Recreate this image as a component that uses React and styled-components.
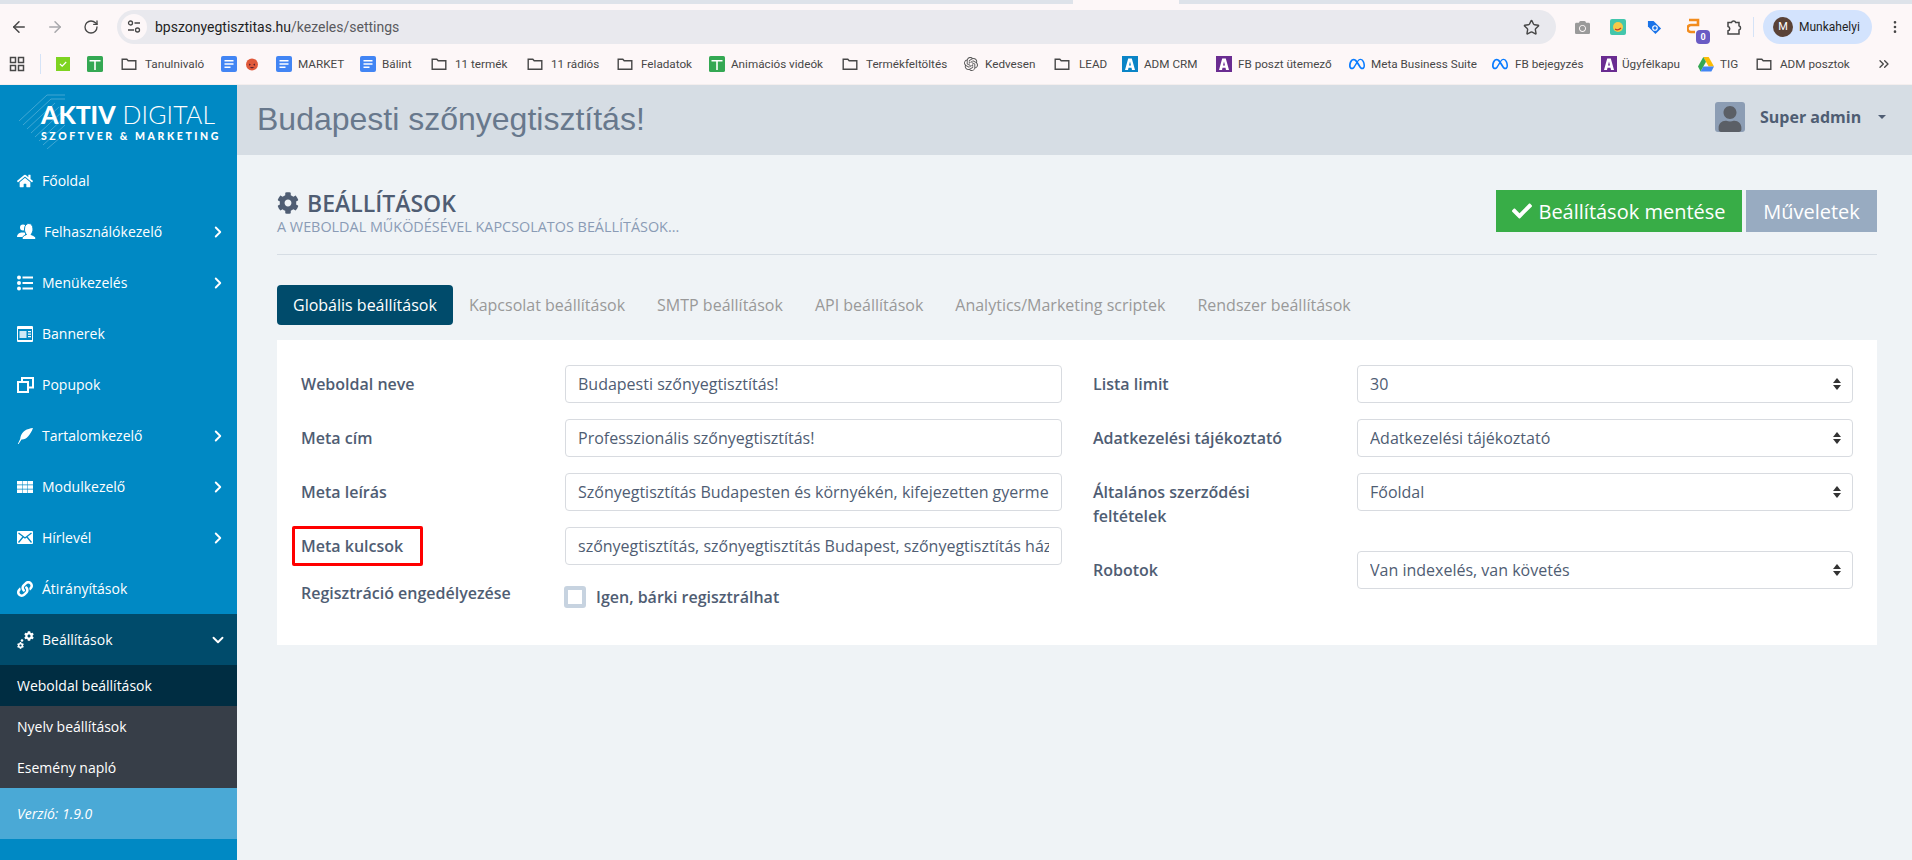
import styled, { createGlobalStyle } from "styled-components";
import { ArrowLeft, ArrowRight, RotateCw, Star, ChevronRight, ChevronDown, ChevronsRight, EllipsisVertical } from "lucide-react";
import { FaHome, FaLink, FaCog, FaCheck, FaUser, FaCamera } from "react-icons/fa";
import { SiMeta, SiOpenai } from "react-icons/si";

const GlobalStyle = createGlobalStyle`
  html, body { margin: 0; padding: 0; height: 100%; }
  body { font-family: "Open Sans", "Noto Sans", sans-serif; background: #eff3f6; overflow: hidden; }
  * { box-sizing: border-box; }
`;

const Page = styled.div`
  width: 1912px;
  height: 860px;
  display: flex;
  flex-direction: column;
  overflow: hidden;
`;

/* browser chrome */
const TabStrip = styled.div`
  height: 4px;
  flex: none;
  background: #dee3ea;
  display: flex;
  padding-left: 1073px;
`;
const TabStub = styled.div`
  width: 106px;
  background: #fdf7f8;
`;
const Toolbar = styled.div`
  height: 40px;
  flex: none;
  background: #fdf7f8;
  display: flex;
  align-items: flex-start;
  padding: 6px 0 0 1px;
`;
const NavButton = styled.div`
  width: 36px;
  height: 34px;
  flex: none;
  display: flex;
  align-items: center;
  justify-content: center;
  color: ${(p) => (p.$off ? "#a8a8ac" : "#474747")};
`;
const Omnibox = styled.div`
  width: 1439px;
  height: 34px;
  flex: none;
  margin-left: 8px;
  border-radius: 17px;
  background: #e9e9ee;
  display: flex;
  align-items: center;
  padding: 0 16px 0 4px;
`;
const TuneBadge = styled.div`
  width: 26px;
  height: 26px;
  border-radius: 50%;
  background: #fdf7f8;
  display: flex;
  align-items: center;
  justify-content: center;
  margin-right: 8px;
`;
const Url = styled.div`
  flex: 1;
  font-family: Roboto, sans-serif;
  font-size: 14px;
  color: #1f1f1f;
  span { color: #5a5a5e; }
`;
const ExtSlot = styled.div`
  width: ${(p) => p.$w}px;
  height: 34px;
  flex: none;
  position: relative;
  display: flex;
  align-items: center;
  justify-content: center;
  color: ${(p) => p.$color ?? "#474747"};
`;
const CountBadge = styled.span`
  position: absolute;
  right: 6px;
  bottom: 0;
  width: 14px;
  height: 14px;
  border-radius: 4px;
  background: #6a5bc4;
  color: #fff;
  font: 700 9px/14px Roboto, sans-serif;
  text-align: center;
`;
const ToolbarSep = styled.div`
  width: 1px;
  height: 20px;
  flex: none;
  margin: 7px 9px 0 1px;
  background: #d5e3f7;
`;
const ProfilePill = styled.div`
  width: 109px;
  height: 34px;
  flex: none;
  border-radius: 17px;
  background: #d3e3fd;
  display: flex;
  align-items: center;
  padding-left: 10px;
  gap: 6px;
  font-family: Roboto, sans-serif;
  font-size: 12px;
  color: #1f1f1f;
`;
const ProfileAvatar = styled.div`
  width: 20px;
  height: 20px;
  border-radius: 50%;
  background: #5a4236;
  color: #fff;
  font-size: 11px;
  line-height: 20px;
  text-align: center;
`;
const BookmarkBar = styled.div`
  height: 41px;
  flex: none;
  background: #fdf7f8;
  display: flex;
  align-items: center;
  padding-left: 9px;
  border-bottom: 1px solid #f4eeee;
`;
const Bookmark = styled.div`
  width: ${(p) => p.$w}px;
  flex: none;
  display: flex;
  align-items: center;
  gap: ${(p) => p.$gap ?? 6}px;
  font-family: Roboto, sans-serif;
  font-size: 11.7px;
  color: #474747;
  white-space: nowrap;
`;
const BarSep = styled.div`
  width: ${(p) => p.$w}px;
  height: 20px;
  flex: none;
  border-left: 1px solid #d5e3f7;
`;

const Folder = () => (
  <svg width="16" height="16" viewBox="0 0 16 16" fill="none" stroke="#474747" strokeWidth="1.4">
    <path d="M1.2 3.2h4.6l1.4 1.6h7.6v8.4H1.2z" />
  </svg>
);
const Doc = () => (
  <svg width="16" height="16" viewBox="0 0 16 16">
    <rect width="16" height="16" rx="2" fill="#4285f4" />
    <path d="M3.5 4h9v1.5h-9zM3.5 7.200h9v1.500h-9zM3.500 10.500h6v1.500h-6z" fill="#fff" />
  </svg>
);
const Sheet = () => (
  <svg width="16" height="16" viewBox="0 0 16 16">
    <rect width="16" height="16" rx="1.6" fill="#34a853" />
    <path d="M2.500 4h11v1.600H8.800V14H7.200V5.600H2.500z" fill="#fff" />
  </svg>
);
const CheckSquare = () => (
  <svg width="14" height="14" viewBox="0 0 14 14">
    <rect width="14" height="14" fill="#7ed321" />
    <path d="M4 7l2.200 2.200L10.200 5" stroke="#fff" fill="none" strokeWidth="1.2" />
  </svg>
);
const Pumpkin = () => (
  <svg width="14" height="14" viewBox="0 0 14 14">
    <circle cx="7" cy="7.4" r="6" fill="#e0593a" />
    <path d="M4 6.500l2 1.200-2 1zM10 6.500l-2 1.200 2 1z" fill="#5b2130" />
    <path d="M4.500 10h5l-2.500 1.400z" fill="#5b2130" />
  </svg>
);
const AdmLogo = ({ bg }) => (
  <svg width="16" height="16" viewBox="0 0 16 16">
    <rect width="16" height="16" fill={bg} />
    <path d="M6.200 2.500h3.600L13 14h-3l-.5-2.200h-3L6 14H3zM7 9.500h2L8 5.500z" fill="#fff" />
  </svg>
);
const Drive = () => (
  <svg width="16" height="15" viewBox="0 0 16 15">
    <path d="M5.300 0h5.400L16 9.600h-5.300z" fill="#fbbc04" />
    <path d="M5.300 0L0 9.600l2.600 4.900L8 4.800z" fill="#34a853" />
    <path d="M5.300 9.600H16l-2.600 4.900H2.600z" fill="#4285f4" />
  </svg>
);
const Apps = () => (
  <svg width="16" height="16" viewBox="0 0 16 16" fill="none" stroke="#474747" strokeWidth="1.5">
    <rect x="1.5" y="1.5" width="5" height="5" />
    <rect x="9.5" y="1.5" width="5" height="5" />
    <rect x="1.5" y="9.5" width="5" height="5" />
    <rect x="9.5" y="9.5" width="5" height="5" />
  </svg>
);
const MetaMark = () => <SiMeta size={16} color="#0a7cff" />;

/* app shell */
const Shell = styled.div`
  flex: 1;
  display: flex;
  min-height: 0;
`;
const Sidebar = styled.aside`
  width: 237px;
  flex: none;
  background: #0089c4;
  color: #fff;
  display: flex;
  flex-direction: column;
`;
const LogoBlock = styled.div`
  height: 70px;
  position: relative;
  padding: 17px 0 0 41px;
  font-family: Lato, sans-serif;
  overflow: hidden;
`;
const LogoPattern = styled.svg`
  position: absolute;
  left: 17px;
  top: 2px;
`;
const LogoMain = styled.div`
  position: relative;
  font-size: 24.8px;
  line-height: 26px;
  font-weight: 300;
  white-space: nowrap;
  letter-spacing: 0.2px;
  b { font-weight: 900; letter-spacing: 0; }
`;
const LogoSub = styled.div`
  position: relative;
  font-size: 10.5px;
  line-height: 12px;
  font-weight: 900;
  letter-spacing: 2.58px;
  white-space: nowrap;
  margin-top: 2px;
`;
const NavItem = styled.div`
  height: 51px;
  flex: none;
  display: flex;
  align-items: center;
  padding-left: 17px;
  font-size: 14px;
  font-weight: 500;
  background: ${(p) => (p.$active ? "#004b6b" : "transparent")};
`;
const NavIcon = styled.span`
  width: ${(p) => p.$w ?? 25}px;
  flex: none;
  display: flex;
  align-items: center;
`;
const NavLabel = styled.span`
  flex: 1;
`;
const NavArrow = styled.span`
  width: 36px;
  display: flex;
  justify-content: center;
  padding-right: 2px;
`;
const SubItem = styled.div`
  height: 41px;
  flex: none;
  display: flex;
  align-items: center;
  padding-left: 17px;
  font-size: 14px;
  font-weight: 500;
  background: ${(p) => (p.$active ? "#002d42" : "#373e48")};
`;
const VersionBar = styled.div`
  height: 51px;
  flex: none;
  display: flex;
  align-items: center;
  padding-left: 17px;
  background: #4aa9d6;
  font-size: 14px;
  font-style: italic;
`;

const Main = styled.main`
  flex: 1;
  display: flex;
  flex-direction: column;
  min-width: 0;
`;
const TopBar = styled.header`
  height: 70px;
  flex: none;
  background: #d6dde4;
  display: flex;
  align-items: center;
  padding: 0 0 6px 20px;
`;
const SiteTitle = styled.div`
  flex: 1;
  padding-top: 5px;
  font-family: "Liberation Sans", Arial, sans-serif;
  font-size: 32px;
  color: #68788c;
`;
const UserAvatar = styled.div`
  width: 30px;
  height: 30px;
  border-radius: 3px;
  background: #8c9db4;
  overflow: hidden;
  margin-right: 15px;
  display: flex;
  align-items: flex-end;
  justify-content: center;
`;
const UserName = styled.div`
  font-size: 16px;
  font-weight: 700;
  color: #4f5d73;
  width: 118px;
`;
const Caret = styled.div`
  width: 0;
  height: 0;
  margin-right: 26px;
  border-left: 4px solid transparent;
  border-right: 4px solid transparent;
  border-top: 4px solid #4f5d73;
`;
const Content = styled.div`
  flex: 1;
  padding: 35px 35px 0 40px;
`;
const PageHead = styled.div`
  height: 65px;
  display: flex;
  justify-content: space-between;
  border-bottom: 1px solid #d6dde4;
`;
const TitleRow = styled.h1`
  margin: 0;
  display: flex;
  align-items: center;
  gap: 8px;
  font-size: 23px;
  line-height: 26px;
  font-weight: 600;
  color: #4f5d73;
`;
const SubTitle = styled.div`
  font-size: 14.4px;
  line-height: 16px;
  margin-top: 3px;
  color: #8a9bb5;
`;
const Actions = styled.div`
  display: flex;
  gap: 4px;
`;
const ActionButton = styled.div`
  width: ${(p) => p.$w}px;
  height: 42px;
  background: ${(p) => p.$bg};
  color: #fff;
  font-size: 20px;
  display: flex;
  align-items: center;
  justify-content: center;
  gap: 6px;
`;
const Tabs = styled.div`
  display: flex;
  margin-top: 30px;
  height: 40px;
`;
const Tab = styled.div`
  padding: 0 16px;
  display: flex;
  align-items: center;
  font-size: 16px;
  border-radius: 4px;
  color: ${(p) => (p.$active ? "#fff" : "#999")};
  background: ${(p) => (p.$active ? "#004b6b" : "transparent")};
`;
const Card = styled.section`
  margin-top: 15px;
  background: #fff;
  padding: 25px 24px 21px 24px;
  display: grid;
  grid-template-columns: 761px 760px;
  column-gap: 31px;
  align-items: start;
`;
const Row = styled.div`
  display: grid;
  grid-template-columns: 264px 1fr;
  align-items: start;
  margin-bottom: 16px;
`;
const Label = styled.label`
  position: relative;
  display: block;
  padding: ${(p) => (p.$flat ? "0" : "7px 0")};
  font-size: 16px;
  line-height: 24px;
  font-weight: 600;
  color: #4f5d73;
  max-width: 220px;
`;
const Highlight = styled.span`
  position: absolute;
  left: -9px;
  top: -1px;
  width: 131px;
  height: 40px;
  border: 3px solid #f00;
  border-radius: 2px;
`;
const TextInput = styled.input`
  width: 100%;
  height: 38px;
  padding: 0 12px;
  font: 400 16px "Open Sans", sans-serif;
  color: #4f5d73;
  background: #fff;
  border: 1px solid #d8dbe0;
  border-radius: 4px;
  outline: none;
`;
const SelectWrap = styled.div`
  position: relative;
  &::before, &::after {
    content: "";
    position: absolute;
    right: 12px;
    border-left: 4px solid transparent;
    border-right: 4px solid transparent;
  }
  &::before { top: 13px; border-bottom: 5px solid #333; }
  &::after { top: 20px; border-top: 5px solid #333; }
`;
const Select = styled.select`
  width: 100%;
  height: 38px;
  padding: 0 12px;
  appearance: none;
  font: 400 16px "Open Sans", sans-serif;
  color: #4f5d73;
  background: #fff;
  border: 1px solid #d8dbe0;
  border-radius: 4px;
  outline: none;
`;
const CheckRow = styled.div`
  display: flex;
  align-items: center;
  gap: 10px;
  margin: 5px 0 0 -1px;
  font-size: 16px;
  font-weight: 600;
  color: #4f5d73;
`;
const CheckBox = styled.span`
  width: 22px;
  height: 22px;
  background: #fff;
  border: 4px solid #c7d3e0;
  border-radius: 3px;
`;

// left edge of each bookmark in the bar, the slot width is taken from the next one
const bookmarks = [
  { x: 9, icon: <Apps /> },
  { x: 40, sep: true },
  { x: 56, icon: <CheckSquare /> },
  { x: 87, icon: <Sheet /> },
  { x: 121, icon: <Folder />, gap: 8, text: "Tanulnivaló" },
  { x: 221, icon: <Doc /> },
  { x: 245, icon: <Pumpkin /> },
  { x: 276, icon: <Doc />, text: "MARKET" },
  { x: 360, icon: <Doc />, text: "Bálint" },
  { x: 431, icon: <Folder />, gap: 8, text: "11 termék" },
  { x: 527, icon: <Folder />, gap: 8, text: "11 rádiós" },
  { x: 617, icon: <Folder />, gap: 8, text: "Feladatok" },
  { x: 709, icon: <Sheet />, text: "Animációs videók" },
  { x: 842, icon: <Folder />, gap: 8, text: "Termékfeltöltés" },
  { x: 964, icon: <SiOpenai size={14} color="#555" />, gap: 7, text: "Kedvesen" },
  { x: 1054, icon: <Folder />, gap: 9, text: "LEAD" },
  { x: 1122, icon: <AdmLogo bg="#0a84c6" />, text: "ADM CRM" },
  { x: 1216, icon: <AdmLogo bg="#6a2c91" />, text: "FB poszt ütemező" },
  { x: 1349, icon: <MetaMark />, text: "Meta Business Suite" },
  { x: 1492, icon: <MetaMark />, gap: 7, text: "FB bejegyzés" },
  { x: 1601, icon: <AdmLogo bg="#6a2c91" />, gap: 5, text: "Ügyfélkapu" },
  { x: 1698, icon: <Drive />, text: "TIG" },
  { x: 1756, icon: <Folder />, gap: 8, text: "ADM posztok" },
  { x: 1876 },
];

const UsersIcon = () => (
  <svg width="19" height="17" viewBox="0 0 19 17" fill="#fff">
    <circle cx="6" cy="4.5" r="3" />
    <path d="M0 14c0-3 2.500-4 4-4.500h4V14z" />
    <path d="M5 16.500c0-3 2-4 4.500-5-1.500-1.500-2-3.500-2-5.500C7.500 2.500 9.500.5 11.800.5S16 2.500 16 6c0 2-.6 4-2 5.500 2.500 1 5 2 5 5z" stroke="#0089c4" strokeWidth="1" />
  </svg>
);
const ListIcon = () => (
  <svg width="16" height="16" viewBox="0 0 16 16" fill="#fff">
    <circle cx="2" cy="2.5" r="2" /><circle cx="2" cy="8" r="2" /><circle cx="2" cy="13.5" r="2" />
    <path d="M5.500 1.500H16v2H5.500zM5.500 7H16v2H5.500zM5.500 12.500H16v2H5.500z" />
  </svg>
);
const BannerIcon = () => (
  <svg width="16" height="16" viewBox="0 0 16 16">
    <rect width="16" height="16" rx="1" fill="#fff" />
    <rect x="1" y="3" width="14" height="11" fill="#0089c4" />
    <rect x="2.5" y="5" width="7" height="7" fill="#cfe9f5" />
    <path d="M11 5h3v1.200h-3zM11 7.500h3v1.200h-3zM11 10h3v1.200h-3z" fill="#fff" />
  </svg>
);
const PopupIcon = () => (
  <svg width="17" height="16" viewBox="0 0 17 16" fill="none" stroke="#fff" strokeWidth="2">
    <path d="M5 5V1h11v9.500h-5" />
    <rect x="1" y="5" width="10" height="10" />
  </svg>
);
const QuillIcon = () => (
  <svg width="16" height="16" viewBox="0 0 16 16" fill="#fff">
    <path d="M16 0C10 .8 5 3 3.500 9L3.200 11 .8 16h.8L4.500 11.500C9 12 13.500 7 16 0z" />
  </svg>
);
const GridIcon = () => (
  <svg width="16" height="12" viewBox="0 0 16 12" fill="#fff">
    <path d="M0 0h5v3.500H0zM5.500 0h5v3.500h-5zM11 0h5v3.500h-5zM0 4.250h5v3.500H0zM5.500 4.250h5v3.500h-5zM11 4.250h5v3.500h-5zM0 8.500h5V12H0zM5.500 8.500h5V12h-5zM11 8.500h5V12h-5z" />
  </svg>
);
const MailIcon = () => (
  <svg width="16" height="13" viewBox="0 0 16 13">
    <rect width="16" height="13" rx="1" fill="#fff" />
    <path d="M1.500 2L8 7l6.500-5M1.500 11.500l4.500-5.500M14.500 11.500L10 6" stroke="#0089c4" strokeWidth="1.3" fill="none" />
  </svg>
);
const CogsIcon = () => (
  <svg width="17" height="18" viewBox="0 0 17 18">
    <FaCog x="7" y="0" size={10} color="#fff" />
    <FaCog x="0" y="11" size={7} color="#fff" />
    <circle cx="5" cy="9.5" r="1.3" fill="#fff" />
  </svg>
);
const TuneIcon = () => (
  <svg width="16" height="16" viewBox="0 0 16 16" fill="none" stroke="#474747" strokeWidth="1.3">
    <circle cx="4.5" cy="4" r="2" />
    <path d="M8.500 4H14M2 11h6" />
    <circle cx="11.5" cy="11" r="2" />
  </svg>
);
const EmojiExt = () => (
  <svg width="16" height="16" viewBox="0 0 16 16">
    <rect width="16" height="16" rx="2" fill="#43c6ac" />
    <circle cx="8" cy="8" r="5" fill="#f7c948" />
    <path d="M5 10c2 1.500 4 1 6-1" stroke="#c0392b" fill="none" strokeWidth="1.2" />
  </svg>
);
const TagExt = () => (
  <svg width="15" height="15" viewBox="0 0 16 16">
    <path d="M1 1h6l8 8-6 6-8-8z" fill="#1a73e8" />
    <circle cx="8.5" cy="8.5" r="2.4" fill="none" stroke="#fff" strokeWidth="1.2" />
  </svg>
);
const OrangeExt = () => (
  <svg width="14" height="18" viewBox="0 0 14 18" fill="none" stroke="#f28c1e" strokeWidth="2.6">
    <path d="M2 2h9v5H4a3.500 3.500 0 0 0 0 7h4" />
  </svg>
);
const PuzzleIcon = () => (
  <svg width="17" height="18" viewBox="0 0 17 18" fill="none" stroke="#474747" strokeWidth="1.5">
    <path d="M2 4.500h3.500a2.200 2.200 0 0 1 4.200 0H13v3.300a2.200 2.200 0 0 1 0 4.200v4H2v-3.200a2.200 2.200 0 0 0 0-4.300z" />
  </svg>
);
const LogoArt = () => (
  <LogoPattern width="60" height="62" viewBox="0 0 60 62" fill="none" stroke="#fff" strokeOpacity="0.25">
    <path d="M2 34L30 8M6 38L34 12M10 42L38 16M14 46L42 20M18 50L46 24M22 54L48 30M26 58L48 38M30 62L44 50" />
    <path d="M30 8h18M34 12h14" />
  </LogoPattern>
);
const arrow = <ChevronRight size={18} strokeWidth={2.5} />;

const menu = [
  { label: "Főoldal", icon: <FaHome size={16} /> },
  { label: "Felhasználókezelő", icon: <UsersIcon />, w: 27, more: true },
  { label: "Menükezelés", icon: <ListIcon />, more: true },
  { label: "Bannerek", icon: <BannerIcon /> },
  { label: "Popupok", icon: <PopupIcon /> },
  { label: "Tartalomkezelő", icon: <QuillIcon />, more: true },
  { label: "Modulkezelő", icon: <GridIcon />, more: true },
  { label: "Hírlevél", icon: <MailIcon />, more: true },
  { label: "Átirányítások", icon: <FaLink size={16} /> },
];

export default function App() {
  return (
    <Page>
      <GlobalStyle />
      <TabStrip><TabStub /></TabStrip>
      <Toolbar>
        <NavButton><ArrowLeft size={18} /></NavButton>
        <NavButton $off><ArrowRight size={18} /></NavButton>
        <NavButton><RotateCw size={16} /></NavButton>
        <Omnibox>
          <TuneBadge><TuneIcon /></TuneBadge>
          <Url>bpszonyegtisztitas.hu<span>/kezeles/settings</span></Url>
          <Star size={17} color="#474747" />
        </Omnibox>
        <ExtSlot $w={8} />
        <ExtSlot $w={36} $color="#9a9a9a"><FaCamera size={15} /></ExtSlot>
        <ExtSlot $w={36}><EmojiExt /></ExtSlot>
        <ExtSlot $w={36}><TagExt /></ExtSlot>
        <ExtSlot $w={44}><OrangeExt /><CountBadge>0</CountBadge></ExtSlot>
        <ExtSlot $w={36}><PuzzleIcon /></ExtSlot>
        <ToolbarSep />
        <ProfilePill>
          <ProfileAvatar>M</ProfileAvatar>
          Munkahelyi
        </ProfilePill>
        <ExtSlot $w={46}><EllipsisVertical size={16} /></ExtSlot>
      </Toolbar>
      <BookmarkBar>
        {bookmarks.slice(0, -1).map((b, i) => {
          const w = bookmarks[i + 1].x - b.x;
          return b.sep ? (
            <BarSep key={b.x} $w={w} />
          ) : (
            <Bookmark key={b.x} $w={w} $gap={b.gap}>
              {b.icon}
              {b.text}
            </Bookmark>
          );
        })}
        <ChevronsRight size={16} color="#474747" />
      </BookmarkBar>
      <Shell>
        <Sidebar>
          <LogoBlock>
            <LogoArt />
            <LogoMain><b>AKTIV</b> DIGITAL</LogoMain>
            <LogoSub>SZOFTVER &amp; MARKETING</LogoSub>
          </LogoBlock>
          {menu.map((m) => (
            <NavItem key={m.label}>
              <NavIcon $w={m.w}>{m.icon}</NavIcon>
              <NavLabel>{m.label}</NavLabel>
              {m.more && <NavArrow>{arrow}</NavArrow>}
            </NavItem>
          ))}
          <NavItem $active>
            <NavIcon><CogsIcon /></NavIcon>
            <NavLabel>Beállítások</NavLabel>
            <NavArrow><ChevronDown size={18} strokeWidth={2.5} /></NavArrow>
          </NavItem>
          <SubItem $active>Weboldal beállítások</SubItem>
          <SubItem>Nyelv beállítások</SubItem>
          <SubItem>Esemény napló</SubItem>
          <VersionBar>Verzió: 1.9.0</VersionBar>
        </Sidebar>
        <Main>
          <TopBar>
            <SiteTitle>Budapesti szőnyegtisztítás!</SiteTitle>
            <UserAvatar><FaUser size={26} color="#5b5f66" /></UserAvatar>
            <UserName>Super admin</UserName>
            <Caret />
          </TopBar>
          <Content>
            <PageHead>
              <div>
                <TitleRow><FaCog size={22} />BEÁLLÍTÁSOK</TitleRow>
                <SubTitle>A WEBOLDAL MŰKÖDÉSÉVEL KAPCSOLATOS BEÁLLÍTÁSOK...</SubTitle>
              </div>
              <Actions>
                <ActionButton $w={246} $bg="#38ad47"><FaCheck size={20} />Beállítások mentése</ActionButton>
                <ActionButton $w={131} $bg="#98abc1">Műveletek</ActionButton>
              </Actions>
            </PageHead>
            <Tabs>
              <Tab $active>Globális beállítások</Tab>
              <Tab>Kapcsolat beállítások</Tab>
              <Tab>SMTP beállítások</Tab>
              <Tab>API beállítások</Tab>
              <Tab>Analytics/Marketing scriptek</Tab>
              <Tab>Rendszer beállítások</Tab>
            </Tabs>
            <Card>
              <div>
                <Row>
                  <Label>Weboldal neve</Label>
                  <TextInput readOnly value="Budapesti szőnyegtisztítás!" />
                </Row>
                <Row>
                  <Label>Meta cím</Label>
                  <TextInput readOnly value="Professzionális szőnyegtisztítás!" />
                </Row>
                <Row>
                  <Label>Meta leírás</Label>
                  <TextInput readOnly value="Szőnyegtisztítás Budapesten és környékén, kifejezetten gyermekbarát" />
                </Row>
                <Row>
                  <Label>Meta kulcsok<Highlight /></Label>
                  <TextInput readOnly value="szőnyegtisztítás, szőnyegtisztítás Budapest, szőnyegtisztítás házhoz" />
                </Row>
                <Row>
                  <Label $flat>Regisztráció engedélyezése</Label>
                  <CheckRow><CheckBox />Igen, bárki regisztrálhat</CheckRow>
                </Row>
              </div>
              <div>
                <Row>
                  <Label>Lista limit</Label>
                  <SelectWrap><Select defaultValue="30"><option>30</option></Select></SelectWrap>
                </Row>
                <Row>
                  <Label>Adatkezelési tájékoztató</Label>
                  <SelectWrap><Select><option>Adatkezelési tájékoztató</option></Select></SelectWrap>
                </Row>
                <Row>
                  <Label>Általános szerződési feltételek</Label>
                  <SelectWrap><Select><option>Főoldal</option></Select></SelectWrap>
                </Row>
                <Row>
                  <Label>Robotok</Label>
                  <SelectWrap><Select><option>Van indexelés, van követés</option></Select></SelectWrap>
                </Row>
              </div>
            </Card>
          </Content>
        </Main>
      </Shell>
    </Page>
  );
}
